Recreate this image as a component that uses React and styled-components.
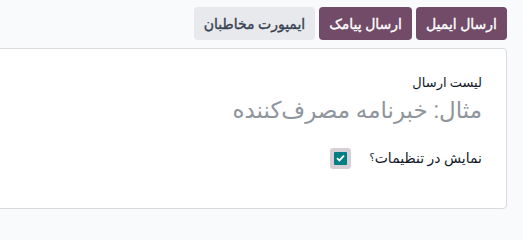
import React from "react";
import styled, { createGlobalStyle } from "styled-components";

const Global = createGlobalStyle`
  html, body { margin: 0; padding: 0; }
  body {
    background: #f9fafb;
    font-family: Roboto, "Noto Sans", "DejaVu Sans", sans-serif;
    overflow: hidden;
  }
`;

const Page = styled.div`
  direction: rtl;
  width: 523px;
  height: 214px;
  display: flex;
  flex-direction: column;
  overflow: hidden;
`;

const Toolbar = styled.div`
  display: flex;
  gap: 4px;
  padding: 7px 16px 0 0;
  height: 33px;
`;

const Button = styled.button`
  font-family: inherit;
  font-size: 14px;
  font-weight: 500;
  -webkit-text-stroke: 0.35px currentColor;
  height: 33px;
  padding: 0 10px;
  border: none;
  border-radius: 4px;
  cursor: pointer;
  background: ${(p) => (p.$primary ? "#714b67" : "#e7e9ed")};
  color: ${(p) => (p.$primary ? "#ffffff" : "#374151")};
`;

const Card = styled.div`
  margin: 8px 16px 0 -10px;
  height: 161px;
  background: #ffffff;
  border: 1px solid #d8dadd;
  border-radius: 4px;
  padding: 0 24px;
  box-sizing: border-box;
`;

const FieldLabel = styled.div`
  margin-top: 25px;
  font-size: 13px;
  font-weight: 500;
  color: #111827;
  line-height: 18px;
`;

const Title = styled.div`
  font-size: 23px;
  line-height: 37px;
  color: #8f959c;
`;

const OptionRow = styled.div`
  margin-top: 21px;
  display: flex;
  align-items: center;
`;

const OptionText = styled.span`
  font-size: 14px;
  color: #111827;
`;

const Help = styled.sup`
  font-size: 10px;
  line-height: 10px;
  color: #111827;
  margin: 3px 0 0 0;
  align-self: flex-start;
`;

const Check = styled.span`
  width: 13px;
  height: 13px;
  margin-right: 22px;
  border-radius: 1px;
  background: #017e84;
  box-shadow: 0 0 0 4px #d6d0d6;
  display: inline-flex;
  align-items: center;
  justify-content: center;
`;

export default function App() {
  return (
    <>
      <Global />
      <Page>
        <Toolbar>
          <Button $primary>ارسال ایمیل</Button>
          <Button $primary>ارسال پیامک</Button>
          <Button>ایمپورت مخاطبان</Button>
        </Toolbar>
        <Card>
          <FieldLabel>لیست ارسال</FieldLabel>
          <Title>مثال: خبرنامه مصرف‌کننده</Title>
          <OptionRow>
            <OptionText>نمایش در تنظیمات</OptionText>
            <Help>؟</Help>
            <Check>
              <svg width="9" height="8" viewBox="0 0 9 8">
                <path d="M1 4.2 L3.4 6.4 L8 1.6" stroke="#fff" strokeWidth="1.8" fill="none" />
              </svg>
            </Check>
          </OptionRow>
        </Card>
      </Page>
    </>
  );
}
